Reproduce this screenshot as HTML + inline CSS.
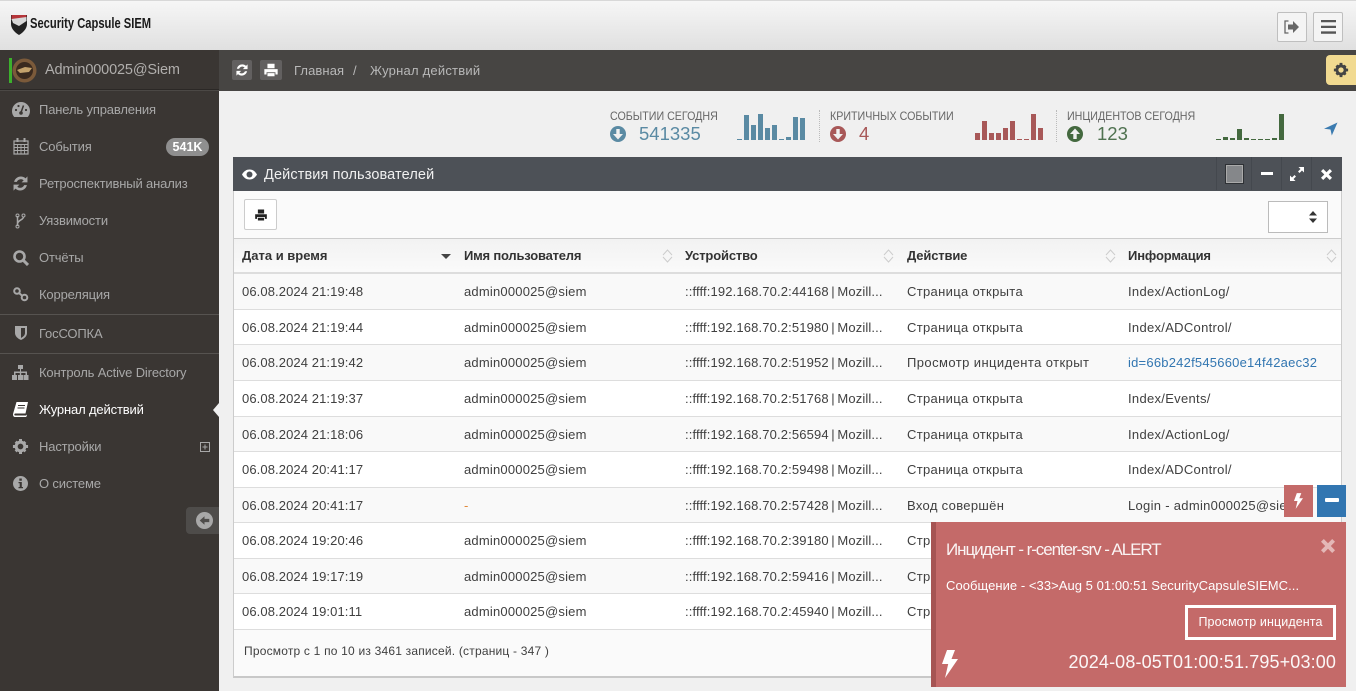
<!DOCTYPE html>
<html lang="ru"><head><meta charset="utf-8"><title>Журнал действий</title>
<style>
*{box-sizing:border-box}
html,body{margin:0;padding:0;width:1356px;height:691px;overflow:hidden;background:#f0f0f0;font-family:"Liberation Sans","Noto Sans CJK SC",sans-serif;font-size:13px;color:#404040}
.a{position:absolute;white-space:nowrap}
#top{position:absolute;left:0;top:0;width:1356px;height:50px;background:linear-gradient(#f6f6f6,#e0e0e0);border-top:1px solid #d8d8d8}
.tb{position:absolute;top:11px;width:30px;height:30px;border:1px solid #bfbfbf;border-radius:2px;background:#f4f4f4}
#bar{position:absolute;left:219px;top:50px;width:1137px;height:41px;background:#474543}
#side{position:absolute;left:0;top:50px;width:219px;height:641px;background:#3a3633}
.m{position:absolute;left:39px;color:#a8a8a8;font-size:13px;line-height:16px;white-space:nowrap;letter-spacing:-.15px}
.sep{position:absolute;left:0;width:219px;height:1px;background:#565350}
#panel{position:absolute;left:233px;top:157px;width:1109px;height:521px;background:#fafafa;border:1px solid #ccc;border-top:0;border-bottom:2px solid #c8c8c8}
#ph{position:absolute;left:233px;top:157px;width:1109px;height:34px;background:#4d5157}
.r{position:absolute;left:234px;width:1107px;height:36px;border-bottom:1px solid #ddd}
.r span{position:absolute;top:10px;line-height:16px;white-space:nowrap;color:#404040;font-size:13px}
.c1{left:8px;letter-spacing:.1px}.c2{left:230px;letter-spacing:.2px}.c3{left:451px;letter-spacing:.14px;word-spacing:-1.2px}.c4{left:673px;letter-spacing:.33px}.c5{left:894px;letter-spacing:.3px}
.th{position:absolute;top:248px;font-weight:bold;font-size:13px;line-height:16px;color:#333;letter-spacing:-.15px;white-space:nowrap}
.sl{position:absolute;font-size:12px;color:#666;line-height:14px;white-space:nowrap;transform:scaleX(.89);transform-origin:0 0}
.sn{position:absolute;font-size:18.500px;line-height:22px;white-space:nowrap}
.dv{position:absolute;top:110px;width:0;height:32px;border-left:1px dotted #bbb}
.pb{position:absolute;top:157px;width:1px;height:33px;background:#44484e}
</style></head><body>
<svg width="0" height="0" style="position:absolute"><defs>
<symbol id="gear" viewBox="0 0 18 18"><circle cx="9" cy="9" r="4.6" fill="none" stroke="currentColor" stroke-width="3.2"/><path d="M7.400 1h3.200v3H7.400zM7.400 14h3.200v3H7.400zM1 7.400h3v3.200H1zM14 7.400h3v3.200h-3zM2.800 5 5 2.800l2 2L4.800 7zM11 13l2-2 2.200 2.200-2 2zM2.800 13 5 11l2 2-2.200 2.200zM11 5l2-2 2.200 2.200-2 2z" fill="currentColor"/></symbol>
<symbol id="sync" viewBox="2 2 14 14"><path d="M3 7.500C3.800 4.500 6.300 2.500 9.300 2.500c1.700 0 3.200.6 4.400 1.700L15.500 2.400V8H10l2-2c-.8-.7-1.700-1-2.700-1-1.700 0-3.200 1.100-3.700 2.500zM15 10.500c-.8 3-3.300 5-6.300 5-1.700 0-3.200-.6-4.400-1.700L2.500 15.600V10H8l-2 2c.8.700 1.700 1 2.700 1 1.700 0 3.200-1.100 3.700-2.500z" fill="currentColor"/></symbol>
<symbol id="print" viewBox="0 0 18 18"><path d="M5 2h8v5H5zM1.500 8h15v6H14v-2.500H4V14H1.500zM5 12.500h8V16H5z" fill="currentColor"/></symbol>
<symbol id="down" viewBox="0 0 16 16"><circle cx="8" cy="8" r="8" fill="currentColor"/><path d="M6.300 3h3.400v5H13l-5 5.500L3 8h3.300z" fill="#f0f0f0"/></symbol>
<symbol id="up" viewBox="0 0 16 16"><circle cx="8" cy="8" r="8" fill="currentColor"/><path d="M6.300 13h3.400V8H13L8 2.500 3 8h3.300z" fill="#f0f0f0"/></symbol>
<symbol id="bolt" viewBox="0 0 16 28"><path d="M5 0h8L9.500 9H16L3 28l3.200-14H0z" fill="currentColor"/></symbol>
</defs></svg>

<div id="top">
<svg class="a" style="left:11px;top:13px" width="16" height="22" viewBox="0 0 16 22"><path d="M0 1h16v9c0 4-3 8-8 11C3 18 0 14 0 10z" fill="#222"/><path d="M.5 1h15v3L.5 6z" fill="#b5353a"/><path d="M.5 5l15-2v4L8 12 2 9z" fill="#d8d8d8"/></svg>
<div class="a" style="left:30px;top:14px;font-weight:bold;font-size:15px;line-height:18px;color:#1a1a1a;transform:scaleX(.745);transform-origin:0 0">Security Capsule SIEM</div>
<div class="tb" style="left:1277px"><svg class="a" style="left:6px;top:7px" width="16" height="14" viewBox="0 0 16 14"><path d="M4.500 1H1v12h3.500" fill="none" stroke="#666" stroke-width="1.300"/><path d="M4 4.500h5V1l6 6-6 6V9.500H4z" fill="#666"/></svg></div>
<div class="tb" style="left:1313px"><svg class="a" style="left:7px;top:7px" width="15" height="14" viewBox="0 0 15 14"><path d="M0 0h15v2.300H0zM0 5.700h15V8H0zM0 11.400h15v2.300H0z" fill="#555"/></svg></div>
</div>

<div id="bar">
<div class="a" style="left:13px;top:10px;width:20px;height:20px;background:#626060;border-radius:2px"><svg style="position:absolute;left:4px;top:4px;color:#fff" width="12" height="12"><use href="#sync"/></svg></div>
<div class="a" style="left:41px;top:10px;width:22px;height:20px;background:#626060;border-radius:2px"><svg style="position:absolute;left:3px;top:2px;color:#fff" width="16" height="16"><use href="#print"/></svg></div>
<div class="a" style="left:75px;top:13px;color:#b8b8b8;line-height:16px;letter-spacing:.1px">Главная</div>
<div class="a" style="left:134px;top:13px;color:#b8b8b8;line-height:16px">/</div>
<div class="a" style="left:151px;top:13px;color:#b8b8b8;line-height:16px;letter-spacing:.22px">Журнал действий</div>
<div class="a" style="left:1107px;top:5px;width:30px;height:30px;background:#f1da91;border-radius:4px 0 0 4px"><svg style="position:absolute;left:7px;top:7px;color:#444" width="16" height="16"><use href="#gear"/></svg></div>
</div>

<div id="side">
<div class="a" style="left:9px;top:8px;width:3px;height:25px;background:#3cb02c"></div>
<svg class="a" style="left:12px;top:8px" width="25" height="25" viewBox="0 0 25 25"><circle cx="12.500" cy="12.500" r="12" fill="#7b5a3a"/><circle cx="12.500" cy="12.500" r="8.500" fill="#3a2a1f"/><path d="M5 12l8-3 7 1-3 4-9 1z" fill="#c4a26c"/></svg>
<div class="a" style="left:45px;top:11px;color:#b0aeac;font-size:14.500px;line-height:18px;letter-spacing:-.15px">Admin000025@Siem</div>
<div class="a" style="left:0;top:39px;width:219px;height:2px;background:#2b2826;border-bottom:1px solid #4b4845"></div>
</div>
<svg class="a" style="left:12px;top:102px" width="18" height="15" viewBox="0 0 18 15"><path d="M9 0a9 9 0 0 1 9 9c0 2.300-.8 4.300-2.200 6H2.200A9 9 0 0 1 0 9a9 9 0 0 1 9-9z" fill="#a8a8a8"/><path d="M9 10.500 11.500 3.500" stroke="#3a3633" stroke-width="1.500"/><circle cx="9" cy="11" r="1.800" fill="#3a3633"/><circle cx="4" cy="8" r="1.100" fill="#3a3633"/><circle cx="6.500" cy="4" r="1.100" fill="#3a3633"/><circle cx="14" cy="8" r="1.100" fill="#3a3633"/></svg>
<svg class="a" style="left:13px;top:138px" width="16" height="17" viewBox="0 0 16 17"><path d="M1 3h14v13H1z" fill="none" stroke="#a8a8a8" stroke-width="1.200"/><path d="M1 6.500h14M1 9.500h14M1 12.500h14M4.500 6v10M8 6v10M11.500 6v10" stroke="#a8a8a8" stroke-width=".9"/><path d="M3.500 0h2v4h-2zM10.500 0h2v4h-2z" fill="#a8a8a8"/></svg>
<svg class="a" style="left:13px;top:176px;color:#a8a8a8" width="15" height="15"><use href="#sync"/></svg>
<svg class="a" style="left:15px;top:213px" width="11" height="16" viewBox="0 0 11 16"><path d="M2.500 3v10M8.500 4c0 3-6 3-6 7" fill="none" stroke="#a8a8a8" stroke-width="1.500"/><circle cx="2.500" cy="2.500" r="1.500" fill="none" stroke="#a8a8a8"/><circle cx="8.500" cy="2.500" r="1.500" fill="none" stroke="#a8a8a8"/><circle cx="2.500" cy="13.500" r="1.500" fill="none" stroke="#a8a8a8"/></svg>
<svg class="a" style="left:13px;top:250px" width="16" height="16" viewBox="0 0 16 16"><circle cx="6.500" cy="6.500" r="5" fill="none" stroke="#a8a8a8" stroke-width="2.600"/><path d="M10 10l5 5" stroke="#a8a8a8" stroke-width="3"/></svg>
<svg class="a" style="left:13px;top:287px" width="16" height="15" viewBox="0 0 16 15"><circle cx="4" cy="4" r="2.800" fill="none" stroke="#a8a8a8" stroke-width="2"/><circle cx="11.500" cy="10.500" r="2.800" fill="none" stroke="#a8a8a8" stroke-width="2"/><path d="M6 6l3.500 3" stroke="#a8a8a8" stroke-width="2"/></svg>
<svg class="a" style="left:15px;top:326px" width="12" height="14" viewBox="0 0 12 14"><path d="M0 0h12v7c0 3-2.500 5.500-6 7-3.500-1.500-6-4-6-7z" fill="#a8a8a8"/><path d="M6 2h4v5c0 2-1.500 3.500-4 5z" fill="#3a3633"/></svg>
<svg class="a" style="left:12px;top:365px" width="17" height="15" viewBox="0 0 17 15"><path d="M6 0h5v4H9v2.500h6V10h1.500v5h-5v-5H13.500V8H9.200v2H11v5H6v-5h1.800V8H3.500v2H5v5H0v-5h2V6.500h6V4H6z" fill="#a8a8a8"/></svg>
<svg class="a" style="left:13px;top:402px" width="15" height="15" viewBox="0 0 15 15"><path d="M3.500 0H15l-2.500 11.500H2.200C1 11.500 1 13.500 2.200 13.500H13l.8-1v1.500L13 15H2C0 15-.3 12.500.3 11z" fill="#fff"/><path d="M5 3.500h7M4.500 6h7" stroke="#3a3633" stroke-width="1"/></svg>
<svg class="a" style="left:12px;top:438px;color:#a8a8a8" width="17" height="17"><use href="#gear"/></svg>
<svg class="a" style="left:13px;top:476px" width="15" height="15" viewBox="0 0 15 15"><circle cx="7.500" cy="7.500" r="7.500" fill="#a8a8a8"/><path d="M6.300 2.500h2.500v2.200H6.300zM5.500 6h3.300v5H10v1.300H5.500V11h1.200V7.300H5.500z" fill="#3a3633"/></svg>
<div class="m" style="top:102px">Панель управления</div>
<div class="m" style="top:139px">События</div>
<div class="a" style="left:166px;top:138px;width:43px;height:18px;border-radius:9px;background:#8f8f8f;color:#fff;font-weight:bold;font-size:12.500px;line-height:18px;text-align:center">541K</div>
<div class="m" style="top:176px">Ретроспективный анализ</div>
<div class="m" style="top:213px">Уязвимости</div>
<div class="m" style="top:250px">Отчёты</div>
<div class="m" style="top:287px">Корреляция</div>
<div class="sep" style="top:314px"></div>
<div class="m" style="top:326px">ГосСОПКА</div>
<div class="sep" style="top:353px"></div>
<div class="m" style="top:365px">Контроль Active Directory</div>
<div class="m" style="top:402px;color:#fff">Журнал действий</div>
<div class="a" style="left:213px;top:403px;width:0;height:0;border-top:7px solid transparent;border-bottom:7px solid transparent;border-right:6px solid #f0f0f0"></div>
<div class="m" style="top:439px">Настройки</div>
<svg class="a" style="left:200px;top:442px" width="10" height="10" viewBox="0 0 10 10"><path d="M.5.500h9v9h-9zM5 2.500v5M2.500 5h5" fill="none" stroke="#a8a8a8"/></svg>
<div class="m" style="top:476px">О системе</div>
<div class="a" style="left:186px;top:507px;width:33px;height:27px;background:#4e4c4a;border-radius:4px 0 0 4px"></div>
<svg class="a" style="left:196px;top:512px" width="17" height="17" viewBox="0 0 16 16"><circle cx="8" cy="8" r="8" fill="#a8a8a8"/><path d="M12.500 6.500v3H8V12L3.500 8 8 4v2.500z" fill="#4e4c4a"/></svg>

<div class="sl" style="left:610px;top:109px">СОБЫТИИ СЕГОДНЯ</div>
<svg class="a" style="left:610px;top:126px;color:#5a8aa3" width="16" height="16"><use href="#down"/></svg>
<div class="sn" style="left:639px;top:123px;color:#5a8aa3">541335</div>
<div class="dv" style="left:819px"></div>
<div class="sl" style="left:830px;top:109px">КРИТИЧНЫХ СОБЫТИИ</div>
<svg class="a" style="left:830px;top:126px;color:#a85858" width="16" height="16"><use href="#down"/></svg>
<div class="sn" style="left:859px;top:123px;color:#a85858">4</div>
<div class="dv" style="left:1056px"></div>
<div class="sl" style="left:1067px;top:109px">ИНЦИДЕНТОВ СЕГОДНЯ</div>
<svg class="a" style="left:1067px;top:126px;color:#44693f" width="16" height="16"><use href="#up"/></svg>
<div class="sn" style="left:1097px;top:123px;color:#4f7250">123</div>

<svg class="a" style="left:737px;top:114px" width="70" height="26" viewBox="0 0 70 26" fill="#5a8aa3"><path d="M0 25h5v1H0zM7 1h5v25H7zM14 11h5v15h-5zM21 0h5v26h-5zM28 14h5v12h-5zM35 11h5v15h-5zM42 25h5v1h-5zM49 23h5v3h-5zM56 3h5v23h-5zM63 4h5v22h-5z"/></svg>
<svg class="a" style="left:975px;top:114px" width="70" height="26" viewBox="0 0 70 26" fill="#a85858"><path d="M0 19h5v7H0zM7 7h5v19H7zM14 19h5v7h-5zM21 19h5v7h-5zM28 14h5v12h-5zM35 7h5v19h-5zM42 25h5v1h-5zM49 25h5v1h-5zM56 0h5v26h-5zM63 14h5v12h-5z"/></svg>
<svg class="a" style="left:1216px;top:114px" width="70" height="26" viewBox="0 0 70 26" fill="#44693f"><path d="M0 25h5v1H0zM7 23h5v3H7zM14 24h5v2h-5zM21 15h5v11h-5zM28 24h5v2h-5zM35 25h5v1h-5zM42 25h5v1h-5zM49 25h5v1h-5zM56 24h5v2h-5zM63 0h5v26h-5z"/></svg>
<svg class="a" style="left:1324px;top:122px" width="14" height="14" viewBox="0 0 14 14"><path d="M13.500.500 7.800 13.500 6.500 7.500 0 6.800z" fill="#3b7bb0"/></svg>

<div id="panel"></div>
<div id="ph">
<svg class="a" style="left:9px;top:12px" width="15" height="11" viewBox="0 0 15 11"><path d="M0 5.500C2 2 4.500.500 7.500.500S13 2 15 5.500C13 9 10.500 10.500 7.500 10.500S2 9 0 5.500z" fill="#fff"/><circle cx="7.500" cy="5.500" r="3" fill="#4d5157"/></svg>
<div class="a" style="left:31px;top:9px;color:#f0f0f0;font-size:14.500px;line-height:19px;letter-spacing:.12px">Действия пользователей</div>
<div class="a" style="left:992px;top:7px;width:19px;height:20px;background:#85878a;border:1px solid #2e3135;box-shadow:inset 0 0 0 1px #aaa"></div>
<div class="a" style="left:1028px;top:15px;width:12px;height:3px;background:#fff"></div>
<svg class="a" style="left:1057px;top:10px" width="14" height="14" viewBox="0 0 14 14"><path d="M8.500 0H14v5.500L12 3.500 9.500 6 8 4.500 10.500 2zM5.500 14H0V8.500L2 10.500 4.500 8 6 9.500 3.500 12z" fill="#fff"/></svg>
<svg class="a" style="left:1088px;top:12px" width="11" height="11" viewBox="0 0 11 11"><path d="M2.200 0 5.500 3.300 8.800 0 11 2.200 7.700 5.500 11 8.800 8.800 11 5.500 7.700 2.200 11 0 8.800 3.300 5.500 0 2.200z" fill="#fff"/></svg>
</div>
<div class="pb" style="left:1216px"></div><div class="pb" style="left:1251px"></div><div class="pb" style="left:1281px"></div><div class="pb" style="left:1311px"></div>

<div class="a" style="left:244px;top:199px;width:33px;height:31px;background:#fff;border:1px solid #ccc;border-radius:2px"><svg style="position:absolute;left:9px;top:8px;color:#222" width="14" height="14"><use href="#print"/></svg></div>
<div class="a" style="left:1268px;top:201px;width:60px;height:32px;background:#fff;border:1px solid #bbb"></div>
<svg class="a" style="left:1309px;top:211px" width="8" height="12" viewBox="0 0 8 12"><path d="M4 0l4 4.500H0zM0 7.500h8L4 12z" fill="#333"/></svg>

<div class="a" style="left:234px;top:238px;width:1107px;height:36px;background:linear-gradient(#f2f2f2,#fafafa);border-top:1px solid #ccc;border-bottom:2px solid #ddd"></div>
<div class="th" style="left:242px;letter-spacing:0">Дата и время</div>
<div class="th" style="left:464px;letter-spacing:-.2px">Имя пользователя</div>
<div class="th" style="left:685px">Устройство</div>
<div class="th" style="left:907px">Действие</div>
<div class="th" style="left:1128px">Информация</div>
<div class="a" style="left:441px;top:254px;width:0;height:0;border-left:5px solid transparent;border-right:5px solid transparent;border-top:5px solid #444"></div>
<svg class="a" style="left:662px;top:249px" width="11" height="14" viewBox="0 0 11 14"><path d="M1 6l4.500-5L10 6M1 8l4.500 5L10 8" fill="none" stroke="#ccc"/></svg>
<svg class="a" style="left:883px;top:249px" width="11" height="14" viewBox="0 0 11 14"><path d="M1 6l4.500-5L10 6M1 8l4.500 5L10 8" fill="none" stroke="#ccc"/></svg>
<svg class="a" style="left:1105px;top:249px" width="11" height="14" viewBox="0 0 11 14"><path d="M1 6l4.500-5L10 6M1 8l4.500 5L10 8" fill="none" stroke="#ccc"/></svg>
<svg class="a" style="left:1326px;top:249px" width="11" height="14" viewBox="0 0 11 14"><path d="M1 6l4.500-5L10 6M1 8l4.500 5L10 8" fill="none" stroke="#ccc"/></svg>

<div class="r" style="top:274px;background:#f9f9f9"><span class="c1">06.08.2024 21:19:48</span><span class="c2">admin000025@siem</span><span class="c3">::ffff:192.168.70.2:44168 | Mozill...</span><span class="c4">Страница открыта</span><span class="c5">Index/ActionLog/</span></div>
<div class="r" style="top:310px;background:#fff;height:35px"><span class="c1">06.08.2024 21:19:44</span><span class="c2">admin000025@siem</span><span class="c3">::ffff:192.168.70.2:51980 | Mozill...</span><span class="c4">Страница открыта</span><span class="c5">Index/ADControl/</span></div>
<div class="r" style="top:345px;background:#f9f9f9"><span class="c1">06.08.2024 21:19:42</span><span class="c2">admin000025@siem</span><span class="c3">::ffff:192.168.70.2:51952 | Mozill...</span><span class="c4" style="letter-spacing:.42px">Просмотр инцидента открыт</span><span class="c5" style="color:#3276b1;letter-spacing:.22px">id=66b242f545660e14f42aec32</span></div>
<div class="r" style="top:381px;background:#fff"><span class="c1">06.08.2024 21:19:37</span><span class="c2">admin000025@siem</span><span class="c3">::ffff:192.168.70.2:51768 | Mozill...</span><span class="c4">Страница открыта</span><span class="c5">Index/Events/</span></div>
<div class="r" style="top:417px;background:#f9f9f9;height:35px"><span class="c1">06.08.2024 21:18:06</span><span class="c2">admin000025@siem</span><span class="c3">::ffff:192.168.70.2:56594 | Mozill...</span><span class="c4">Страница открыта</span><span class="c5">Index/ActionLog/</span></div>
<div class="r" style="top:452px;background:#fff"><span class="c1">06.08.2024 20:41:17</span><span class="c2">admin000025@siem</span><span class="c3">::ffff:192.168.70.2:59498 | Mozill...</span><span class="c4">Страница открыта</span><span class="c5">Index/ADControl/</span></div>
<div class="r" style="top:488px;background:#f9f9f9;height:35px"><span class="c1">06.08.2024 20:41:17</span><span class="c2" style="color:#e08a3c">-</span><span class="c3">::ffff:192.168.70.2:57428 | Mozill...</span><span class="c4">Вход совершён</span><span class="c5">Login - admin000025@siem</span></div>
<div class="r" style="top:523px;background:#fff"><span class="c1">06.08.2024 19:20:46</span><span class="c2">admin000025@siem</span><span class="c3">::ffff:192.168.70.2:39180 | Mozill...</span><span class="c4">Страница открыта</span></div>
<div class="r" style="top:559px;background:#f9f9f9;height:35px"><span class="c1">06.08.2024 19:17:19</span><span class="c2">admin000025@siem</span><span class="c3">::ffff:192.168.70.2:59416 | Mozill...</span><span class="c4">Страница открыта</span></div>
<div class="r" style="top:594px;background:#fff"><span class="c1">06.08.2024 19:01:11</span><span class="c2">admin000025@siem</span><span class="c3">::ffff:192.168.70.2:45940 | Mozill...</span><span class="c4">Страница открыта</span></div>
<div class="a" style="left:244px;top:644px;font-size:12px;line-height:15px;color:#404040;letter-spacing:.2px">Просмотр с 1 по 10 из 3461 записей. (страниц - 347 )</div>

<div class="a" style="left:1284px;top:485px;width:29px;height:32px;background:#c46a69"></div>
<svg class="a" style="left:1294px;top:493px;color:#fff" width="9" height="16"><use href="#bolt"/></svg>
<div class="a" style="left:1317px;top:485px;width:29px;height:32px;background:#3276b1"></div>
<div class="a" style="left:1325px;top:498px;width:14px;height:4px;background:#fff;border-radius:1px"></div>

<div class="a" style="left:931px;top:522px;width:415px;height:165px;background:#c46a69;border-left:5px solid #a65453"></div>
<div class="a" style="left:946px;top:539px;color:#fff;font-size:17px;line-height:21px;letter-spacing:-1.08px;opacity:.93">Инцидент - r-center-srv - ALERT</div>
<svg class="a" style="left:1321px;top:539px" width="14" height="14" viewBox="0 0 11 11"><path d="M2.200 0 5.500 3.300 8.800 0 11 2.200 7.700 5.500 11 8.800 8.800 11 5.500 7.700 2.200 11 0 8.800 3.300 5.500 0 2.200z" fill="#e4b8b7"/></svg>
<div class="a" style="left:946px;top:578px;color:#fff;font-size:13px;line-height:16px;letter-spacing:.05px">Сообщение - &lt;33&gt;Aug 5 01:00:51 SecurityCapsuleSIEMC...</div>
<div class="a" style="left:1185px;top:605px;width:151px;height:35px;border:3px solid #fff;color:#fff;font-size:12.500px;line-height:29px;text-align:center;letter-spacing:.1px">Просмотр инцидента</div>
<svg class="a" style="left:942px;top:650px;color:#fff" width="16" height="28"><use href="#bolt"/></svg>
<div class="a" style="right:20px;top:651px;color:#fff;font-size:18px;line-height:22px;letter-spacing:.13px;opacity:.95">2024-08-05T01:00:51.795+03:00</div>
</body></html>
